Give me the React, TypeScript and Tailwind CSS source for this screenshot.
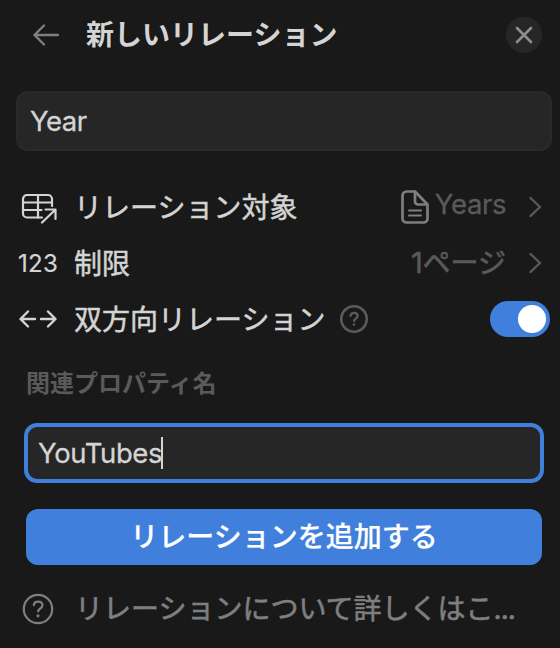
import React, { useState } from 'react';

const App: React.FC = () => {
  const [twoWay, setTwoWay] = useState(true);

  return (
    <div className="w-[560px] h-[648px] overflow-hidden bg-[#191919] text-[#d4d4d4] font-['Inter','Noto_Sans_CJK_JP',sans-serif] text-[28px] leading-[42px]">
      <header className="flex items-center h-[70px] pl-[33px] pr-[18px]">
        <BackIcon />
        <h1 className="ml-[27px] flex-1 font-bold whitespace-nowrap">新しいリレーション</h1>
        <button className="flex items-center justify-center size-9 rounded-full bg-[#262626]" aria-label="閉じる">
          <CloseIcon />
        </button>
      </header>

      <div className="mt-[21px] ml-4 mr-2 h-[60px] flex items-center rounded-xl border-2 border-[#2a2a2a] bg-[#262626] px-3">
        <span className="text-[27.5px] tracking-[-0.5px] [-webkit-text-stroke:0.3px]">Year</span>
      </div>

      <div className="mt-7">
        <Row icon={<RelationIcon />} label="リレーション対象">
          <PageIcon />
          <span className="ml-[6px] mr-[22px] -mt-[6px] text-[27.5px] tracking-[-0.4px] text-[#5a5a5a] [-webkit-text-stroke:0.3px]">Years</span>
          <ChevronIcon />
        </Row>
        <Row icon={<span className="block pt-px text-[24px] tracking-[0.3px] [-webkit-text-stroke:0.2px]">123</span>} label="制限">
          <span className="mr-[22px] text-[#5a5a5a] [-webkit-text-stroke:0.6px]">1ページ</span>
          <ChevronIcon />
        </Row>
        <Row icon={<TwoWayIcon />} label="双方向リレーション" help>
          <button
            onClick={() => setTwoWay(!twoWay)}
            className={`-mr-2 flex items-center w-[60px] h-9 p-1 rounded-full ${twoWay ? 'justify-end bg-[#4080dc]' : 'bg-[#3a3a3a]'}`}
            role="switch"
            aria-checked={twoWay}
          >
            <span className="size-7 rounded-full bg-white" />
          </button>
        </Row>
      </div>

      <div className="mt-[19px] ml-[26px] h-9 flex items-center text-2xl font-bold text-[#5a5a5a]">関連プロパティ名</div>

      <div className="mt-[21px] ml-6 mr-4 h-[60px] flex items-center rounded-[13px] border-4 border-[#4080dc] bg-[#262626] pl-[10px]">
        <span className="text-[27.5px] tracking-[-0.4px] [-webkit-text-stroke:0.3px]">YouTubes</span>
        <span className="-ml-px w-[2px] h-8 bg-[#d4d4d4]" />
      </div>

      <button className="mt-[26px] ml-[26px] w-[516px] h-14 flex items-center justify-center rounded-xl bg-[#4080dc] text-white font-medium [-webkit-text-stroke:0.2px]">
        リレーションを追加する
      </button>

      <div className="mt-4 h-14 flex items-center pl-[22px] text-[#7f7f7f]">
        <HelpIcon className="size-8" />
        <span className="ml-[21px] whitespace-nowrap [-webkit-text-stroke:0.6px]">
          リレーションについて詳しくはこ<span className="tracking-[-1px]">...</span>
        </span>
      </div>
    </div>
  );
};

interface RowProps {
  icon: React.ReactNode;
  label: string;
  help?: boolean;
  children: React.ReactNode;
}

const Row = ({ icon, label, help, children }: RowProps) => (
  <div className="flex items-center h-14 px-[18px]">
    <div className="w-10 flex justify-center shrink-0">{icon}</div>
    <span className="ml-4 pt-px whitespace-nowrap [-webkit-text-stroke:0.5px]">{label}</span>
    {help && <HelpIcon className="size-[30px] ml-[14px] text-[#5a5a5a]" small />}
    <div className="ml-auto flex items-center">{children}</div>
  </div>
);

const BackIcon = () => (
  <svg width="26" height="22" viewBox="0 0 26 22" fill="none" stroke="#7f7f7f" strokeWidth="2.4" strokeLinecap="round" strokeLinejoin="round">
    <path d="M25 11H1.5M11 1.5L1.5 11l9.5 9.5" />
  </svg>
);

const CloseIcon = () => (
  <svg width="18" height="18" viewBox="0 0 18 18" fill="none" stroke="#8e8e8e" strokeWidth="2.6" strokeLinecap="round">
    <path d="M2 2l14 14M16 2L2 16" />
  </svg>
);

const RelationIcon = () => (
  <svg className="mt-[3px] ml-[2px]" width="36" height="31" viewBox="0 0 36 31" fill="none" stroke="currentColor" strokeWidth="2.2" strokeLinecap="round" strokeLinejoin="round">
    <path d="M31 13V6a4 4 0 0 0-4-4H6a4 4 0 0 0-4 4v14.5a4 4 0 0 0 4 4h15" />
    <path d="M2 9.5h29M2 17h18.5M17 2v22.5" />
    <path d="M21 29.5l13-12.5M24.5 16.500h10v9.5" />
  </svg>
);

const TwoWayIcon = () => (
  <svg width="38" height="18" viewBox="0 0 38 18" fill="none" stroke="currentColor" strokeWidth="2.4" strokeLinecap="round" strokeLinejoin="round">
    <path d="M16 9H2M9 1.5L1.5 9 9 16.5M22 9h14M29 1.5L36.5 9 29 16.5" />
  </svg>
);

const PageIcon = () => (
  <svg width="28" height="34" viewBox="0 0 28 34" fill="none" stroke="#7f7f7f" strokeWidth="2.7" strokeLinecap="round" strokeLinejoin="round">
    <path d="M14 1.5H5.5a4 4 0 0 0-4 4v23a4 4 0 0 0 4 4h17a4 4 0 0 0 4-4V14.5L14 1.5z" />
    <path d="M14 1.5v10a3 3 0 0 0 3 3h9" />
    <path d="M8 20.5h12M8 25.5h12" strokeWidth="2" />
  </svg>
);

const ChevronIcon = () => (
  <svg width="14" height="22" viewBox="0 0 14 22" fill="none" stroke="#5a5a5a" strokeWidth="2.4" strokeLinecap="round" strokeLinejoin="round">
    <path d="M2.5 2l9.5 9-9.5 9" />
  </svg>
);

// small: heavier ring with a tighter question mark, used beside row labels
const HelpIcon = ({ className, small }: { className: string; small?: boolean }) => (
  <svg className={className} viewBox="0 0 32 32" fill="none" stroke="currentColor" strokeWidth={small ? 2.8 : 2.2} strokeLinecap="round" strokeLinejoin="round">
    <circle cx="16" cy="16" r={small ? 13.6 : 14.2} />
    <g transform={small ? 'translate(1.9 1.9) scale(.88)' : undefined}>
      <path d="M11.8 12.200c.3-2.200 1.900-3.500 4.300-3.500 2.500 0 4.300 1.400 4.300 3.500 0 1.600-.9 2.600-2.400 3.500-1.400.9-1.900 1.500-1.900 2.800" />
      <circle cx="16" cy="22.8" r="1.6" fill="currentColor" stroke="none" />
    </g>
  </svg>
);

export default App;
